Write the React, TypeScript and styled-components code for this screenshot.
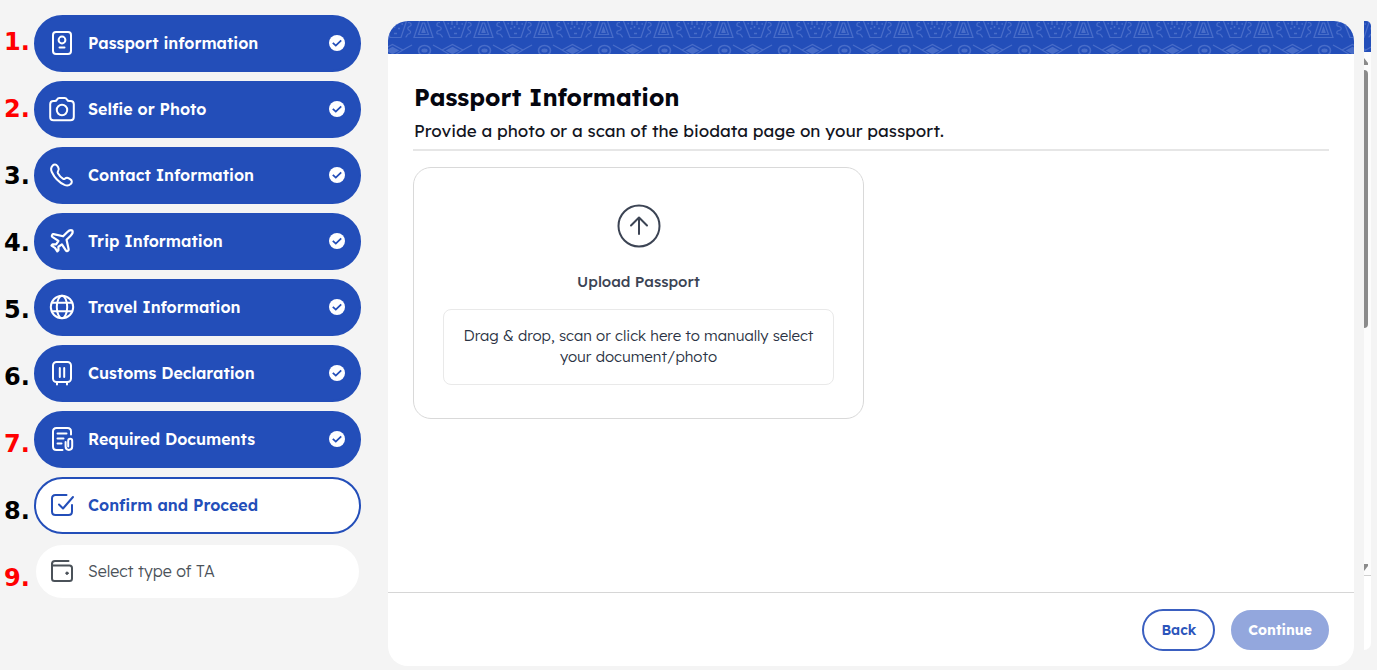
import React from "react";
import styled, { createGlobalStyle } from "styled-components";

const blue = "#234eb9";
const ink = "#3c4454";

const GlobalStyle = createGlobalStyle`
  * { box-sizing: border-box; }
  body {
    margin: 0;
    background: #f4f4f4;
    font-family: Lexend, Inter, "Liberation Sans", sans-serif;
  }
  button { font-family: inherit; cursor: pointer; }
`;

const Page = styled.div`
  display: flex;
  min-height: 100vh;
  padding: 0 6px 0 4px;
`;

const Numbers = styled.div`
  width: 30px;
  flex: none;
  padding-top: 9px;
  font-family: "DejaVu Sans", sans-serif;
  font-weight: 700;
  font-size: 24px;
  line-height: 67px;
`;

const StepNumber = styled.div<{ $highlight: boolean }>`
  color: ${(p) => (p.$highlight ? "#ff0000" : "#000000")};
`;

const Steps = styled.nav`
  width: 327px;
  flex: none;
  display: flex;
  flex-direction: column;
  gap: 9px;
  padding-top: 15px;
`;

type StepState = "done" | "current" | "todo";

const Step = styled.button<{ $state: StepState }>`
  display: flex;
  align-items: center;
  gap: 12px;
  height: 57px;
  padding: 0 14px 2px 12px;
  border: 2px solid ${(p) => (p.$state === "todo" ? "transparent" : blue)};
  border-radius: 29px;
  background: ${(p) => (p.$state === "done" ? blue : "#ffffff")};
  background-clip: ${(p) => (p.$state === "todo" ? "padding-box" : "border-box")};
  color: ${(p) => (p.$state === "done" ? "#ffffff" : p.$state === "current" ? blue : "#4b5259")};
  font-size: 16px;
  font-weight: ${(p) => (p.$state === "todo" ? 300 : 600)};
  line-height: 20px;
  text-align: left;
`;

const StepLabel = styled.span`
  flex: 1;
`;

const LineIcon = styled.svg`
  flex: none;
  fill: none;
  stroke: currentColor;
  stroke-width: 2;
  stroke-linecap: round;
  stroke-linejoin: round;
`;

const Panel = styled.main`
  flex: 1;
  min-width: 0;
  display: flex;
  flex-direction: column;
  margin: 21px 0 4px 27px;
  border-radius: 20px;
  background: #ffffff;
  overflow: hidden;
`;

const Banner = styled.svg<{ $height: number }>`
  display: block;
  width: 100%;
  height: ${(p) => p.$height}px;
  flex: none;
`;

const Content = styled.section`
  flex: 1;
  padding: 27px 25px;
`;

const Heading = styled.header`
  padding: 0 0 7px 1px;
  border-bottom: 2px solid #e6e6e6;
`;

const Title = styled.h1`
  margin: 0;
  font-size: 24px;
  font-weight: 700;
  line-height: 32px;
  color: #05060f;
`;

const Subtitle = styled.p`
  margin: 7px 0 0;
  font-size: 17px;
  line-height: 22px;
  color: #14161f;
`;

const UploadCard = styled.label`
  display: flex;
  flex-direction: column;
  align-items: center;
  width: 451px;
  max-width: 100%;
  margin-top: 16px;
  padding: 36px 29px 33px;
  border: 1px solid #d9d9d9;
  border-radius: 18px;
  color: ${ink};
  cursor: pointer;
`;

const FileInput = styled.input`
  position: absolute;
  width: 1px;
  height: 1px;
  opacity: 0;
`;

const UploadTitle = styled.span`
  margin: 24px 0 17px;
  font-size: 15px;
  font-weight: 500;
  line-height: 20px;
`;

const DropZone = styled.span`
  width: 100%;
  padding: 15px 12px 17px;
  border: 1px solid #e9e9e9;
  border-radius: 8px;
  font-size: 15px;
  font-weight: 300;
  line-height: 21px;
  text-align: center;
  color: #2b3344;
`;

const Actions = styled.footer`
  display: flex;
  justify-content: flex-end;
  align-items: center;
  gap: 16px;
  padding: 16px 25px 15px;
  border-top: 1px solid #d6d6d6;
`;

const ActionButton = styled.button<{ $primary?: boolean }>`
  height: ${(p) => (p.$primary ? 40 : 42)}px;
  padding: 0 ${(p) => (p.$primary ? 15 : 17)}px 1px;
  border: 2px solid ${(p) => (p.$primary ? "#93a7dd" : "#3a5fc0")};
  border-radius: 21px;
  background: ${(p) => (p.$primary ? "#93a7dd" : "#ffffff")};
  color: ${(p) => (p.$primary ? "#ffffff" : "#2c55bb")};
  font-size: 14px;
  font-weight: ${(p) => (p.$primary ? 700 : 600)};
`;

const NextPanel = styled.aside`
  width: 7px;
  flex: none;
  display: flex;
  flex-direction: column;
  margin: 21px 0 20px 10px;
  border-radius: 0 7px 10px 0;
  background: #ffffff;
  overflow: hidden;
`;

const ScrollTrack = styled.div`
  flex: 1;
  display: flex;
  flex-direction: column;
  padding: 6px 0 4px;
  background: #fcfcfc;
  border-bottom: 1px solid #cfcfcf;
`;

const ScrollThumb = styled.div`
  width: 4px;
  height: 258px;
  margin: 5px 0 auto;
  border-radius: 0 4px 4px 0;
  background: #8b8b8b;
`;

const NextFooter = styled.div`
  height: 74px;
`;

function Icon({ children, size = 28 }: { children: React.ReactNode; size?: number }) {
  return (
    <LineIcon width={size} height={size} viewBox={`0 0 ${size} ${size}`} aria-hidden="true">
      {children}
    </LineIcon>
  );
}

const icons = {
  passport: (
    <>
      <rect x="5" y="3" width="18" height="22" rx="3" />
      <circle cx="14" cy="11" r="3.4" />
      <path d="M11.5 18.5h5" />
    </>
  ),
  camera: (
    <>
      <path d="M5.500 6h1.200c1 0 1.800-.5 2.200-1.300l.3-.5c.4-.8 1.100-1.200 2.100-1.200h5.400c1 0 1.700.4 2.100 1.200l.3.5c.4.8 1.200 1.300 2.200 1.300h1.200c2 0 3.300 1.300 3.300 3.300V22c0 2-1.300 3.300-3.300 3.300h-17c-2 0-3.300-1.300-3.300-3.300V9.300C2.200 7.300 3.500 6 5.500 6z" />
      <circle cx="14" cy="15" r="5.200" />
    </>
  ),
  phone: (
    <path d="M4.700 4.500c1.400-1.500 3.400-1.400 4.500.2l1 1.600c.9 1.400.8 2.600-.2 4-.5.8-.5 1.300-.1 2 1.200 2.200 2.900 4 5 5.300.8.5 1.300.5 2 0 1.300-1 2.600-1.100 4-.2l1.600 1c1.600 1.100 1.800 3.100.3 4.500-1.600 1.700-4 2-6.300 1C10.900 21.300 6.600 16.900 3.800 11c-1.100-2.400-.7-4.900.9-6.500z" />
  ),
  plane: (
    <path
      transform="scale(1.160)"
      strokeWidth="1.900"
      d="M17.800 19.200 16 11l3.500-3.500C21 6 21.500 4 21 3c-1-.5-3 0-4.500 1.500L13 8 4.800 6.200c-.5-.1-.9.1-1.100.5l-.3.5c-.2.5-.1 1 .3 1.300L9 12l-2 3H4l-1 1 3 2 2 3 1-1v-3l3-2 3.500 5.300c.3.4.8.5 1.300.3l.5-.2c.4-.3.6-.7.5-1.200z"
    />
  ),
  globe: (
    <>
      <circle cx="14" cy="14" r="11.200" />
      <ellipse cx="14" cy="14" rx="5.200" ry="11.200" />
      <path d="M4 9.800h20M4 18.200h20" />
    </>
  ),
  luggage: (
    <>
      <rect x="5" y="3" width="18" height="20" rx="3.500" />
      <path d="M11.800 9v9M16.200 9v9M9 23.500v2M19 23.500v2" />
    </>
  ),
  document: (
    <>
      <path d="M14.500 25H8.500c-2 0-3.500-1.500-3.500-3.500v-15C5 4.500 6.500 3 8.500 3h11C21.500 3 23 4.500 23 6.500v3" />
      <path d="M9.500 8.500h9M9.500 13.500h6M9.500 18.500h4" />
      <path d="M17.600 17v4.500c0 4.500 6.600 4.500 6.600 0V16c0-2.900-4-2.900-4 0v5.500" />
    </>
  ),
  confirm: (
    <>
      <path d="M18.500 4H7.500C5.300 4 4 5.300 4 7.500v13C4 22.700 5.300 24 7.500 24h13c2.200 0 3.500-1.300 3.500-3.500V14" />
      <path d="M11 13.500l4 4L25 6" />
    </>
  ),
  wallet: (
    <>
      <path d="M4 7c0-2 1-3 3-3h13.500" />
      <path d="M4 7c0 1 .8 1.500 2 1.500h15.500c1.700 0 2.500.8 2.500 2.500v10.500c0 1.700-.8 2.500-2.500 2.500h-15C4.800 24 4 23.200 4 21.500V7z" />
      <circle cx="19" cy="16.200" r="1.200" fill="currentColor" strokeWidth="1" />
    </>
  ),
};

const steps: { label: string; icon: keyof typeof icons; state: StepState; highlight: boolean }[] = [
  { label: "Passport information", icon: "passport", state: "done", highlight: true },
  { label: "Selfie or Photo", icon: "camera", state: "done", highlight: true },
  { label: "Contact Information", icon: "phone", state: "done", highlight: false },
  { label: "Trip Information", icon: "plane", state: "done", highlight: false },
  { label: "Travel Information", icon: "globe", state: "done", highlight: false },
  { label: "Customs Declaration", icon: "luggage", state: "done", highlight: false },
  { label: "Required Documents", icon: "document", state: "done", highlight: true },
  { label: "Confirm and Proceed", icon: "confirm", state: "current", highlight: false },
  { label: "Select type of TA", icon: "wallet", state: "todo", highlight: true },
];

function DoneBadge() {
  return (
    <svg width="16" height="16" viewBox="0 0 16 16" role="img" aria-label="Completed">
      <circle cx="8" cy="8" r="8" fill="#ffffff" />
      <path d="M3.800 7.800l3 2.800 5.400-5.200" fill="none" stroke={blue} strokeWidth="1.800" />
    </svg>
  );
}

function PatternBanner({ id, height, start }: { id: string; height: number; start: number }) {
  return (
    <Banner $height={height} aria-hidden="true">
      <defs>
        <pattern id={id} x={start} y="0" width="60" height="40" patternUnits="userSpaceOnUse">
          <g fill="none" stroke="#7c97de" strokeWidth="1.200" opacity="0.420">
            <path d="M6.500 0L1 16.500h19L14.500 0" />
            <path d="M9.500 2L5.500 13.500h10L11.500 2z" />
            <path d="M10.500 7l-1.500 4.500h3z" fill="#7c97de" />
            <path d="M27 1.500c-4 0-4 3.500-1 4s3 3.500 0 4-3 3.500 0 3.500 2 3 4 3" />
            <path d="M30.500 0l6.500 16.500h11L53.500 0" />
            <path d="M34.500 2.500h1.500M39 0v4M44 0v4M48.500 3h1.500M37 7.500h2M41.500 5v2M45 7.500h2M41 12.500h3" strokeWidth="1.500" />
            <path d="M55 1.500c4 0 4 3 1.500 4s-2 3 0 4 1 3.500-1 3.500-1 3-3 3" />
            <ellipse cx="11.500" cy="29.500" rx="6" ry="5" strokeWidth="1.600" />
            <ellipse cx="11.500" cy="29.500" rx="2.500" ry="1.500" fill="#7c97de" />
            <path d="M20 24c8 4 12 7 17 10M59 24c-8 4-12 7-17 10" />
            <path d="M29 29l10.500-5.500L50 29" />
            <path d="M34 29.500l5.500-3 5.500 3-5.500 3z" fill="#7c97de" />
          </g>
        </pattern>
      </defs>
      <rect width="100%" height="100%" fill={blue} />
      <rect width="100%" height="100%" fill={`url(#${id})`} />
    </Banner>
  );
}

export default function App() {
  return (
    <>
      <GlobalStyle />
      <Page>
        <Numbers>
          {steps.map((s, i) => (
            <StepNumber key={s.label} $highlight={s.highlight}>{`${i + 1}.`}</StepNumber>
          ))}
        </Numbers>
        <Steps aria-label="Application steps">
          {steps.map((s) => (
            <Step key={s.label} type="button" $state={s.state}>
              <Icon>{icons[s.icon]}</Icon>
              <StepLabel>{s.label}</StepLabel>
              {s.state === "done" && <DoneBadge />}
            </Step>
          ))}
        </Steps>
        <Panel>
          <PatternBanner id="main-pattern" height={33} start={25} />
          <Content>
            <Heading>
              <Title>Passport Information</Title>
              <Subtitle>Provide a photo or a scan of the biodata page on your passport.</Subtitle>
            </Heading>
            <UploadCard>
              <FileInput type="file" />
              <Icon size={44}>
                <circle cx="22" cy="22" r="20.500" />
                <path d="M22 30V13.500M14 21.500l8-8 8 8" />
              </Icon>
              <UploadTitle>Upload Passport</UploadTitle>
              <DropZone>Drag &amp; drop, scan or click here to manually select your document/photo</DropZone>
            </UploadCard>
          </Content>
          <Actions>
            <ActionButton type="button">Back</ActionButton>
            <ActionButton type="button" $primary>
              Continue
            </ActionButton>
          </Actions>
        </Panel>
        <NextPanel>
          <PatternBanner id="next-pattern" height={31} start={12} />
          <ScrollTrack>
            <svg width="4" height="7" viewBox="0 0 4 7" aria-hidden="true">
              <path d="M0 0l4 5v2H0z" fill="#8b8b8b" />
            </svg>
            <ScrollThumb />
            <svg width="4" height="7" viewBox="0 0 4 7" aria-hidden="true">
              <path d="M0 0h4v2L0 7z" fill="#8b8b8b" />
            </svg>
          </ScrollTrack>
          <NextFooter />
        </NextPanel>
      </Page>
    </>
  );
}
